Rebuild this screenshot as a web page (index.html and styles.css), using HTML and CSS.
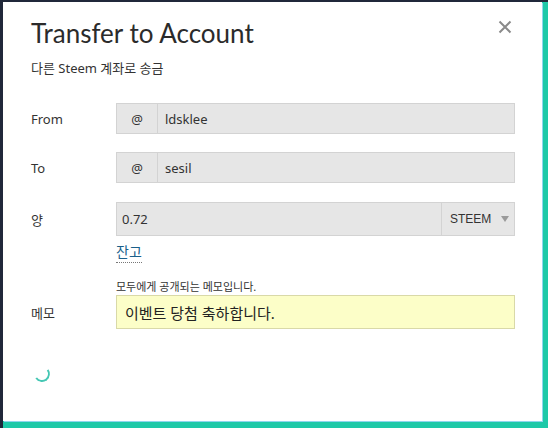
FILE: index.html
```html
<!DOCTYPE html>
<html lang="ko">
<head>
<meta charset="utf-8">
<link rel="stylesheet" href="styles.css">
</head>
<body>
<div class="modal">
  <button class="close" aria-label="close">
    <svg width="14" height="14" viewBox="0 0 14 14"><path d="M1.5 1.5 L12.5 12.5 M12.5 1.5 L1.5 12.5" stroke="#8a8a8a" stroke-width="2" fill="none"/></svg>
  </button>
  <h1 class="title">Transfer to Account</h1>
  <p class="subtitle">다른 Steem 계좌로 송금</p>

  <div class="form">
    <div class="row">
      <label class="label">From</label>
      <div class="group">
        <span class="addon">@</span>
        <span class="field">ldsklee</span>
      </div>
    </div>
    <div class="row">
      <label class="label">To</label>
      <div class="group">
        <span class="addon">@</span>
        <span class="field">sesil</span>
      </div>
    </div>
    <div class="row amount-row">
      <label class="label">양</label>
      <div class="group amount">
        <span class="field">0.72</span>
        <span class="select">STEEM <span class="caret"></span></span>
      </div>
    </div>
    <div class="row">
      <span></span>
      <a class="balance">잔고</a>
    </div>
    <div class="row">
      <span></span>
      <p class="hint">모두에게 공개되는 메모입니다.</p>
    </div>
    <div class="row memo-row">
      <label class="label">메모</label>
      <div class="memo">이벤트 당첨 축하합니다.</div>
    </div>
  </div>
  <div class="spinner"></div>
</div>
</body>
</html>
```
FILE: styles.css
```css
html, body {
  margin: 0;
  padding: 0;
}
body {
  width: 548px;
  height: 428px;
  box-sizing: border-box;
  background: #1ec9a8;
  border-top: 2px solid #20283a;
  border-left: 3px solid #20283a;
  font-family: "Noto Sans", "Noto Sans CJK KR", sans-serif;
  color: #333;
  overflow: hidden;
}
.modal {
  position: relative;
  width: 539px;
  height: 419px;
  background: #fff;
  box-sizing: border-box;
  padding: 14px 32px 0 28px;
  box-shadow: 1px 1px 0 #8fd6ee;
}
.close {
  position: absolute;
  right: 30px;
  top: 18px;
  border: 0;
  background: none;
  padding: 0;
  width: 14px;
  height: 14px;
}
.close svg { display: block; }
.title {
  margin: 0;
  font-family: "Lato", sans-serif;
  font-weight: 400;
  font-size: 26px;
  line-height: 34px;
  color: #2b2b2b;
}
.subtitle {
  margin: 9px 0 0;
  font-size: 13px;
  line-height: 18px;
  color: #333;
}
.form {
  margin-top: 26px;
  display: flex;
  flex-direction: column;
}
.row {
  display: grid;
  grid-template-columns: 85px 399px;
  align-items: center;
  margin-bottom: 18px;
}
.row:nth-child(2) { margin-bottom: 19px; }
.amount-row { margin-bottom: 6px; }
.row:nth-child(4), .row:nth-child(5), .memo-row { margin-bottom: 0; }
.label {
  font-size: 13px;
  color: #333;
}
.group {
  display: flex;
  height: 31px;
  box-sizing: border-box;
  border: 1px solid #d3d3d3;
  background: #e6e6e6;
  font-size: 13px;
  color: #333;
}
.addon {
  width: 40px;
  border-right: 1px solid #d3d3d3;
  display: flex;
  align-items: center;
  justify-content: center;
}
.field {
  flex: 1;
  display: flex;
  align-items: center;
  padding-left: 7px;
}
.amount {
  height: 34px;
}
.amount .field { padding-left: 5px; }
.select {
  width: 73px;
  border-left: 1px solid #d3d3d3;
  display: flex;
  align-items: center;
  padding-left: 8px;
  box-sizing: border-box;
  font-family: "Liberation Sans", sans-serif;
  font-size: 12px;
  color: #333;
  gap: 10px;
}
.caret {
  width: 0;
  height: 0;
  border-left: 4px solid transparent;
  border-right: 4px solid transparent;
  border-top: 6px solid #9a9a9a;
}
.balance {
  justify-self: start;
  font-size: 14px;
  line-height: 20px;
  color: #1a5f8a;
  border-bottom: 1px dotted #777;
}
.hint {
  margin: 16px 0 0;
  font-size: 11px;
  line-height: 16px;
  color: #333;
}
.memo {
  height: 34px;
  box-sizing: border-box;
  border: 1px solid #d9d9a8;
  background: #fcfec8;
  display: flex;
  align-items: center;
  padding-left: 8px;
  font-size: 15px;
  color: #222;
}
.spinner {
  margin: 37px 0 0 3px;
  width: 12px;
  height: 12px;
  border-radius: 50%;
  border: 2px solid transparent;
  border-right-color: #45c7b4;
  border-bottom-color: #45c7b4;
  transform: rotate(10deg);
}
```
